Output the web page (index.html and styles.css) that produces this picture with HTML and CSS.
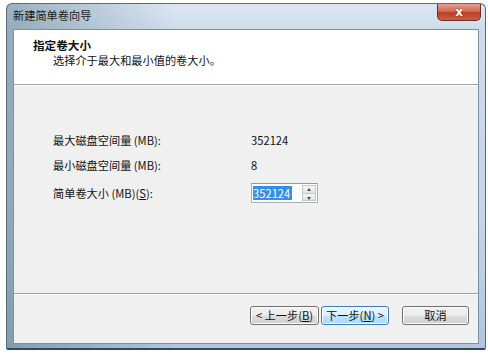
FILE: index.html
```html
<!DOCTYPE html>
<html lang="zh-CN">
<head>
  <meta charset="UTF-8">
  <title>新建简单卷向导</title>
  <link rel="stylesheet" href="styles.css">
</head>
<body>
  <div class="window">
    <div class="titlebar">
      <span class="title">新建简单卷向导</span>
      <button class="close">x</button>
    </div>

    <div class="client">
      <div class="header">
        <div class="head-title">指定卷大小</div>
        <div class="head-sub">选择介于最大和最小值的卷大小。</div>
      </div>

      <div class="content">
        <div class="grid">
          <span>最大磁盘空间量 (MB):</span>
          <span>352124</span>
          <span>最小磁盘空间量 (MB):</span>
          <span>8</span>
          <span>简单卷大小 (MB)(<u>S</u>):</span>
          <div class="spin">
            <div class="spin-field"><span class="sel">352124</span></div>
            <div class="spin-btns">
              <span class="arrow up"></span>
              <span class="arrow down"></span>
            </div>
          </div>
        </div>
      </div>

      <div class="footer">
        <button class="btn">&lt; 上一步(<u>B</u>)</button>
        <button class="btn focus">下一步(<u>N</u>) &gt;</button>
        <button class="btn cancel">取消</button>
      </div>
    </div>
  </div>
</body>
</html>
```

FILE: styles.css
```css
body {
  margin: 0;
  background: #ffffff;
  font-family: "Noto Sans CJK SC", sans-serif;
  font-size: 11.2px;
  color: #111111;
}
.window {
  box-sizing: border-box;
  width: 480px;
  height: 347px;
  margin: 3px 0 0 6px;
  padding: 0 6px 4px 6px;
  border: 1px solid #5a6c7c;
  border-bottom: 2px solid #2f4a58;
  border-radius: 6px 6px 2px 2px;
  background:
    linear-gradient(to right, rgba(40, 80, 96, 0.35) 0%, rgba(40, 80, 96, 0) 35%),
    linear-gradient(to bottom, #dbe6f2 0%, #cddbea 8%, #c6d6e8 60%, #b2c5da 100%);
  display: flex;
  flex-direction: column;
}
.titlebar {
  height: 25px;
  display: flex;
  align-items: flex-start;
  justify-content: space-between;
}
.title {
  padding-top: 3px;
  line-height: 16px;
  color: #1a1a1a;
}
.close {
  width: 44px;
  height: 17px;
  margin-right: -2px;
  padding: 0;
  border: 1px solid #6b3128;
  border-top: none;
  border-radius: 0 0 5px 5px;
  background: linear-gradient(to bottom, #e3a092 0%, #d46a55 45%, #bd3d28 55%, #c95f48 100%);
  color: #ffffff;
  font-family: "DejaVu Sans", sans-serif;
  font-size: 12px;
  font-weight: bold;
  line-height: 14px;
  text-shadow: 0 0 2px #6b2015;
}
.client {
  flex: 1;
  display: flex;
  flex-direction: column;
  border: 1px solid #7d8fa5;
  background: #f0f0f0;
}
.header {
  height: 54px;
  box-sizing: content-box;
  background: #ffffff;
  border-bottom: 1px solid #a0a0a0;
  padding: 0 0 0 19px;
}
.head-title {
  margin-top: 8px;
  line-height: 15px;
  font-weight: bold;
  font-size: 11.6px;
}
.head-sub {
  margin-left: 20px;
  line-height: 15px;
}
.content {
  flex: 1;
  border-top: 1px solid #ffffff;
  padding: 47px 0 0 39px;
}
.grid {
  display: grid;
  grid-template-columns: 198px auto;
  row-gap: 10px;
  align-items: center;
  line-height: 15px;
}
.spin {
  width: 67px;
  height: 20px;
  box-sizing: border-box;
  border: 1px solid #abadb3;
  border-top-color: #8e9bab;
  background: #ffffff;
  display: flex;
}
.spin-field {
  flex: 1;
  padding: 2px 0 0 1px;
}
.sel {
  background: #3390e6;
  color: #ffffff;
  line-height: 14px;
  display: inline-block;
  padding-right: 2px;
}
.spin-btns {
  width: 14px;
  display: flex;
  flex-direction: column;
  margin: 1px 1px 1px 0;
}
.arrow {
  flex: 1;
  border: 1px solid #c4c8ce;
  background: linear-gradient(to bottom, #f6f6f6, #e2e3e6);
  position: relative;
}
.arrow.up {
  border-bottom: none;
}
.arrow::after {
  content: "";
  position: absolute;
  left: 4px;
  top: 2px;
  border-left: 2.5px solid transparent;
  border-right: 2.5px solid transparent;
}
.arrow.up::after {
  border-bottom: 3px solid #4a4a4a;
}
.arrow.down::after {
  top: 3px;
  border-top: 3px solid #4a4a4a;
}
.footer {
  height: 37px;
  border-top: 1px solid #a0a0a0;
  box-shadow: inset 0 1px 0 #ffffff;
  display: flex;
  justify-content: flex-end;
  align-items: flex-start;
  padding: 12px 9px 0 0;
}
.btn {
  height: 19px;
  width: 69px;
  padding: 0;
  border: 1px solid #707070;
  border-radius: 3px;
  background: linear-gradient(to bottom, #f2f2f2 0%, #ebebeb 50%, #dddddd 51%, #cfcfcf 100%);
  font-family: inherit;
  font-size: 11.2px;
  line-height: 15px;
  color: #111111;
  box-shadow: inset 0 0 0 1px #fcfcfc;
}
.btn.focus {
  width: 68px;
  margin-left: 2px;
  border-color: #3c7fb1;
  background: linear-gradient(to bottom, #eaf6fd 0%, #d9f0fc 50%, #bee6fd 51%, #a7d9f5 100%);
}
.btn.cancel {
  width: 67px;
  margin-left: 13px;
}
```
